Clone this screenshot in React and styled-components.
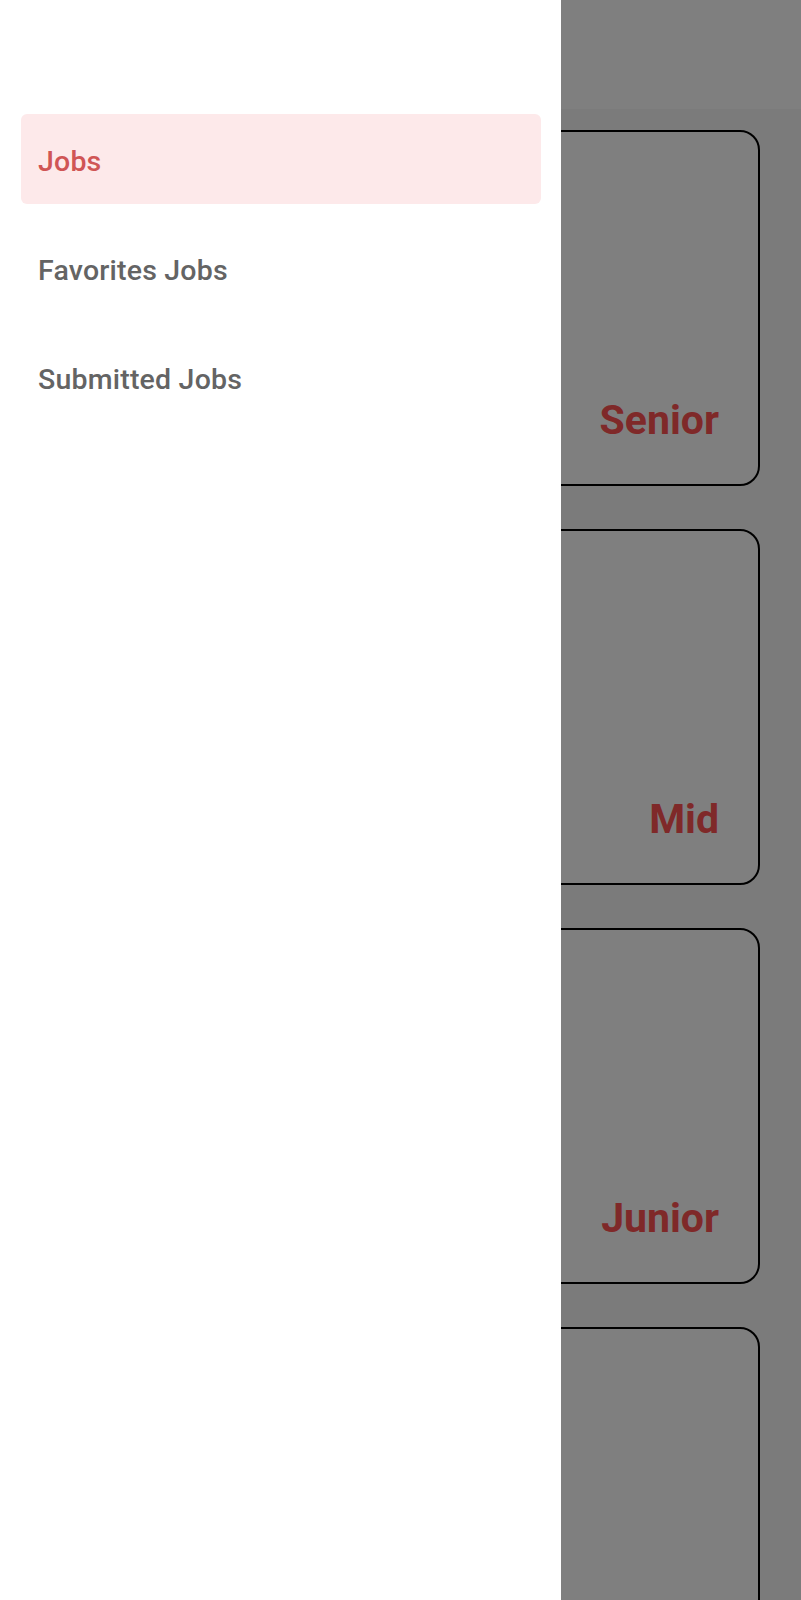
import React from 'react';
import styled, { createGlobalStyle } from 'styled-components';

const levels = ['Senior', 'Mid', 'Junior', 'Senior'];

const menu = [
    { label: 'Jobs', active: true },
    { label: 'Favorites Jobs', active: false },
    { label: 'Submitted Jobs', active: false }
];

export default function App() {
    return (
        <>
            <GlobalStyle />
            <Screen>
                <AppBar />
                <CardList>
                    {levels.map((level, i) => (
                        <LevelCard key={i}>
                            <LevelTitle>{level}</LevelTitle>
                        </LevelCard>
                    ))}
                </CardList>

                <Scrim />

                <Drawer>
                    <NavList>
                        {menu.map((item) => (
                            <NavItem key={item.label} active={item.active}>
                                {item.label}
                            </NavItem>
                        ))}
                    </NavList>
                </Drawer>
            </Screen>
        </>
    );
}

const GlobalStyle = createGlobalStyle`
    body {
        margin: 0;
        font-family: Roboto, "Noto Sans", sans-serif;
    }
    * {
        box-sizing: border-box;
    }
`;

const Screen = styled.div`
    position: relative;
    width: 801px;
    height: 1600px;
    overflow: hidden;
    background-color: #f6f6f6;
`;

const AppBar = styled.div`
    height: 109px;
    background-color: #ffffff;
`;

const CardList = styled.div`
    display: flex;
    flex-direction: column;
    gap: 43px;
    padding: 21px 41px;
`;

const LevelCard = styled.div`
    flex-shrink: 0;
    height: 356px;
    display: flex;
    align-items: flex-end;
    justify-content: flex-end;
    padding: 40px 39px 40px 40px;
    background-color: #ffffff;
    border: 2px solid #000000;
    border-radius: 20px;
`;

const LevelTitle = styled.div`
    font-size: 41px;
    font-weight: bold;
    color: #ff5252;
`;

const Scrim = styled.div`
    position: absolute;
    inset: 0;
    background-color: rgba(0, 0, 0, 0.5);
`;

const Drawer = styled.div`
    position: absolute;
    top: 0;
    left: 0;
    bottom: 0;
    width: 561px;
    background-color: #ffffff;
`;

const NavList = styled.div`
    display: flex;
    flex-direction: column;
    gap: 19px;
    padding: 114px 20px 0 21px;
`;

const NavItem = styled.div`
    height: 90px;
    display: flex;
    align-items: center;
    padding: 5px 0 0 17px;
    border-radius: 6px;
    font-size: 28.5px;
    font-weight: 500;
    letter-spacing: 0.2px;
    color: ${({ active }) => (active ? '#d05555' : '#646464')};
    background-color: ${({ active }) => (active ? '#fde9ea' : 'transparent')};
`;
